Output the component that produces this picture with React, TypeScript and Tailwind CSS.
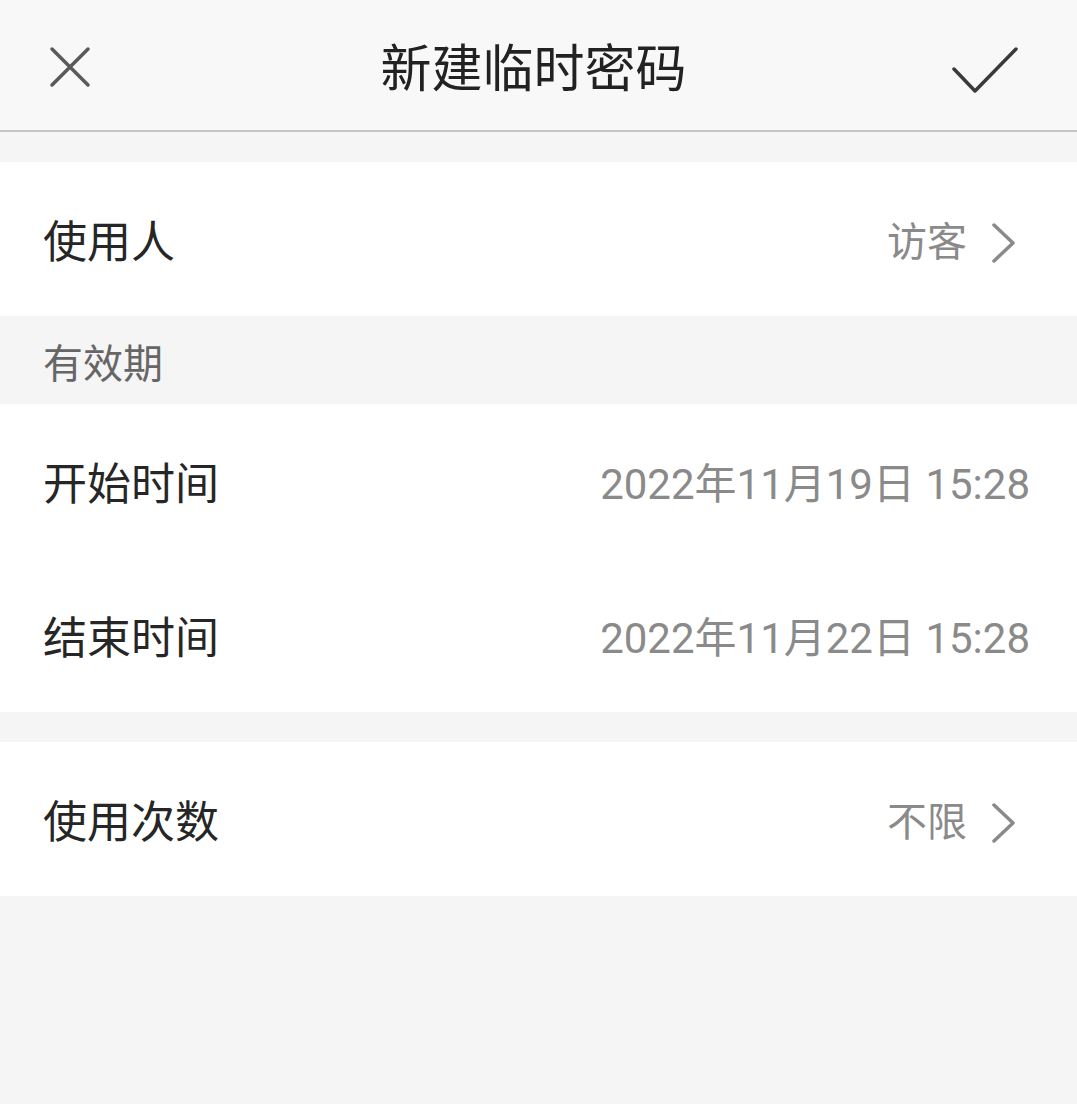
import React from 'react';

const font = { fontFamily: 'Roboto, "Noto Sans CJK SC", "Noto Sans", sans-serif' };

const Chevron = () => (
    <svg width="26" height="40" viewBox="0 0 26 40" fill="none" className="shrink-0">
        <path d="M3 2 L22 20 L3 38" stroke="#8a8a8a" strokeWidth="3.5" strokeLinecap="round" strokeLinejoin="round" />
    </svg>
);

interface RowProps {
    label: string;
    value: string;
    arrow?: boolean;
}

const Row: React.FC<RowProps> = ({ label, value, arrow }) => (
    <div className={`flex items-center justify-between h-[154px] pt-[7px] pl-[43px] ${arrow ? 'pr-[60px]' : 'pr-[47px]'}`}>
        <span className="text-[44px] text-[#262626] leading-none">{label}</span>
        <div className="flex items-center gap-[24px]">
            <span className={`${arrow ? 'text-[40px]' : 'text-[42px]'} text-[#8a8a8a] leading-none`}>{value}</span>
            {arrow && <Chevron />}
        </div>
    </div>
);

const App: React.FC = () => {
    return (
        <div className="w-[1077px] h-[1104px] bg-[#f5f5f5] flex flex-col" style={font}>
            {/* top bar */}
            <div className="h-[132px] bg-[#f8f8f8] border-b-2 border-[#c4c4c4] grid grid-cols-[1fr_auto_1fr] items-center pl-[48px] pr-[58px]">
                <svg width="44" height="44" viewBox="0 0 44 44" fill="none" className="mt-[4px]">
                    <path d="M4 4 L40 40 M40 4 L4 40" stroke="#5a5a5a" strokeWidth="3.5" strokeLinecap="round" />
                </svg>
                <span className="text-[51px] text-[#222] leading-none mt-[8px]">新建临时密码</span>
                <svg width="68" height="48" viewBox="0 0 68 48" fill="none" className="justify-self-end mt-[12px]">
                    <path d="M3 22 L24 44 L65 2" stroke="#3a3a3a" strokeWidth="3.5" strokeLinecap="round" strokeLinejoin="round" />
                </svg>
            </div>

            <div className="mt-[30px] bg-white">
                <Row label="使用人" value="访客" arrow />
            </div>

            <div className="h-[88px] flex items-center pt-[10px] pl-[43px]">
                <span className="text-[40px] text-[#666] leading-none">有效期</span>
            </div>

            <div className="bg-white">
                <Row label="开始时间" value="2022年11月19日 15:28" />
                <Row label="结束时间" value="2022年11月22日 15:28" />
            </div>

            <div className="mt-[30px] bg-white">
                <Row label="使用次数" value="不限" arrow />
            </div>
        </div>
    );
};

export default App;
